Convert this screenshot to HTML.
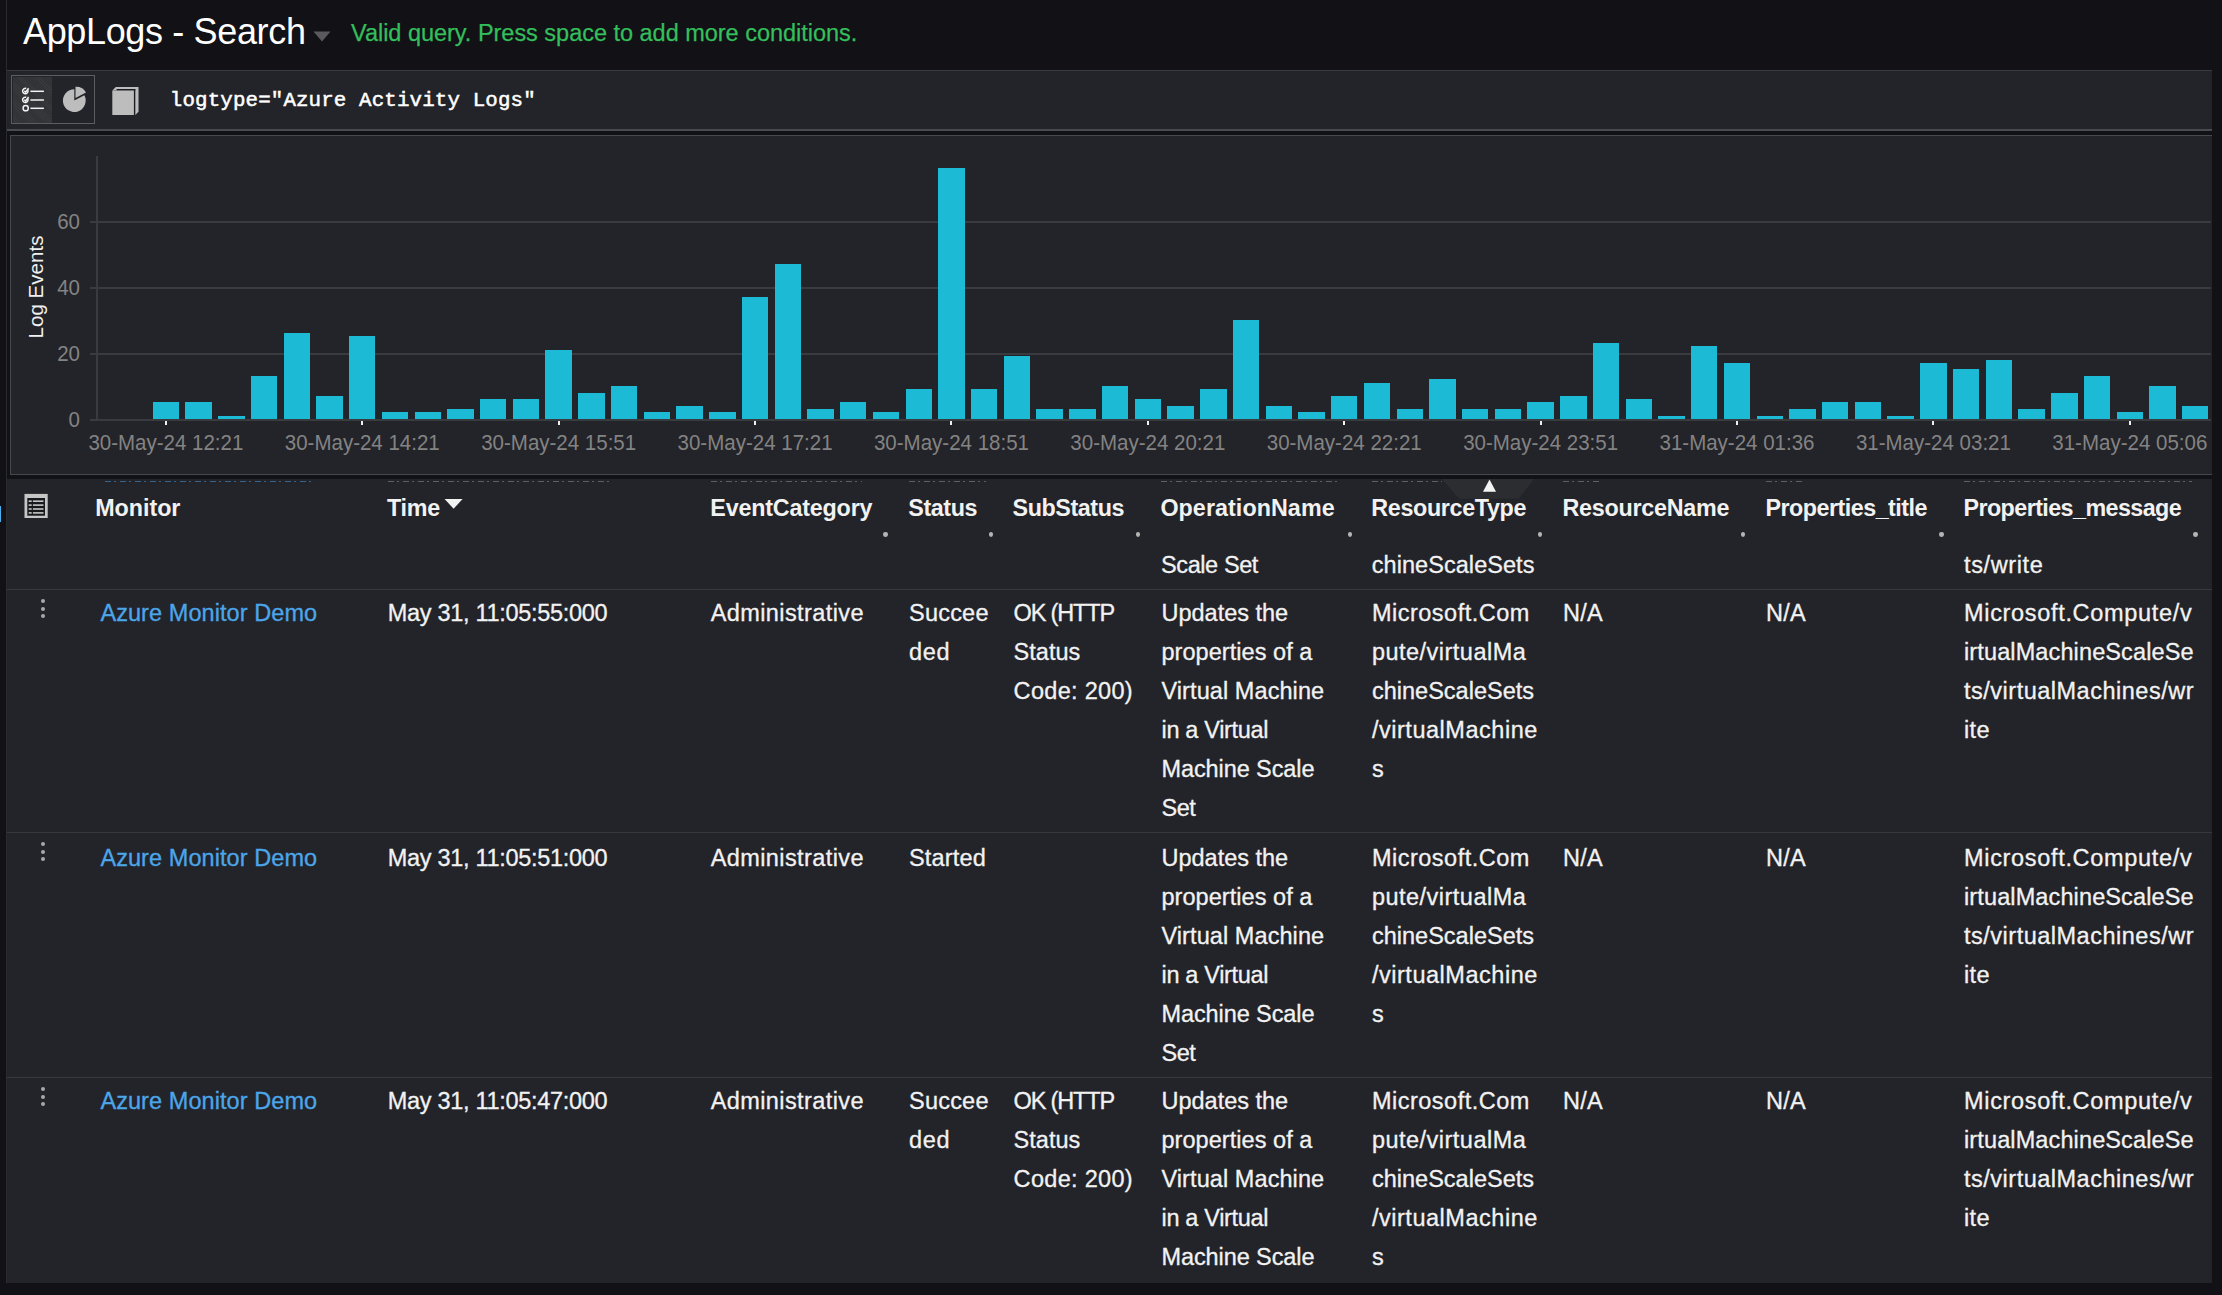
<!DOCTYPE html>
<html><head><meta charset="utf-8"><style>
html,body{margin:0;padding:0;}
body{width:2222px;height:1295px;background:#111116;position:relative;overflow:hidden;font-family:'Liberation Sans',sans-serif;}
.t{position:absolute;white-space:pre;}
.s{-webkit-text-stroke:0.3px currentColor;}
.r{position:absolute;}
</style></head><body>
<div class="t" style="left:23px;top:9.93px;font-size:36px;line-height:43.2px;color:#ffffff;font-weight:normal;font-family:'Liberation Sans';letter-spacing:-0.350px;">AppLogs - Search</div>
<svg class="r" style="left:313px;top:31px" width="18" height="11"><polygon points="0.5,0.5 17.5,0.5 9,10.5" fill="#5a5a5e"/></svg>
<div class="t" style="left:351px;top:18.76px;font-size:23.5px;line-height:28.2px;color:#34bf5c;font-weight:normal;font-family:'Liberation Sans';letter-spacing:-0.020px;-webkit-text-stroke:0.25px #34bf5c;">Valid query. Press space to add more conditions.</div>
<div class="r" style="left:6px;top:0px;width:1.4px;height:1295px;background:#2a2b2f;"></div>
<div class="r" style="left:7px;top:70px;width:2205px;height:61px;background:#232429;"></div>
<div class="r" style="left:7px;top:70px;width:2205px;height:1px;background:#3a3b40;"></div>
<div class="r" style="left:7px;top:129px;width:2205px;height:2px;background:#4a4b50;"></div>
<div class="r" style="left:11px;top:75px;width:84px;height:49px;background:transparent;box-sizing:border-box;border:1.5px solid #5c5d61"></div>
<div class="r" style="left:12.5px;top:76.5px;width:39.5px;height:46px;background:repeating-linear-gradient(45deg,#38393d 0 1px,#303135 1px 2px),#343539;"></div>
<svg class="r" style="left:12px;top:76px" width="40" height="46" viewBox="12 76 40 46">
<g fill="none" stroke="#f2f2f2" stroke-width="1.5">
<path d="M27.6,89.6 A2.7,2.7 0 1 1 26.2,88.5"/><path d="M27.6,98.4 A2.7,2.7 0 1 1 26.2,97.3"/>
<circle cx="25.7" cy="108.2" r="2.6"/>
<polyline points="24.3,90.9 25.6,92.2 28.6,88.2"/><polyline points="24.3,99.7 25.6,101 28.6,97"/>
</g>
<g stroke="#f2f2f2" stroke-width="1.5"><line x1="30.4" y1="91.3" x2="43.9" y2="91.3"/><line x1="30.4" y1="100" x2="43.9" y2="100"/><line x1="30.4" y1="108.3" x2="43.9" y2="108.3"/></g>
</svg>
<svg class="r" style="left:52px;top:76px" width="42" height="46" viewBox="52 76 42 46">
<path d="M74.3,100.6 L74.3,89.2 A11.4,11.4 0 1 0 84.4,95.3 Z" fill="#bdbdbd"/>
<path d="M75.5,98 L75.5,86.8 A11.2,11.2 0 0 1 86,92.5 Z" fill="#bdbdbd"/>
</svg>
<svg class="r" style="left:108px;top:84px" width="34" height="34" viewBox="108 84 34 34">
<polygon points="112.3,90.4 115.8,87.1 138.5,87.1 138.5,111.7 135.3,115 133.9,115 133.9,90.4" fill="#bdbdbd"/>
<rect x="116.5" y="89" width="18.8" height="1.6" fill="#1a1b1f"/>
<rect x="133.9" y="89" width="1.4" height="26" fill="#1a1b1f"/>
<rect x="112.3" y="90.6" width="21.6" height="24.4" fill="#bdbdbd"/>
</svg>
<div class="t" style="left:169.8px;top:88.68px;font-size:20.8px;line-height:24.96px;color:#ffffff;font-weight:normal;font-family:'Liberation Mono';letter-spacing:0.140px;-webkit-text-stroke:0.5px #ffffff;">logtype=&quot;Azure Activity Logs&quot;</div>
<div class="r" style="left:10px;top:135px;width:2212px;height:340px;background:#232429;box-sizing:border-box;border:1.3px solid #47484c"></div>
<div class="t" style="left:40px;width:40px;text-align:right;top:407.60px;font-size:20.5px;line-height:24px;color:#838383;font-family:'Liberation Sans';transform:scaleY(1.07);transform-origin:50% 19.10px">0</div>
<div class="r" style="left:90px;top:353.25px;width:2121px;height:1.5px;background:#3a3b3f;"></div>
<div class="t" style="left:40px;width:40px;text-align:right;top:342.10px;font-size:20.5px;line-height:24px;color:#838383;font-family:'Liberation Sans';transform:scaleY(1.07);transform-origin:50% 19.10px">20</div>
<div class="r" style="left:90px;top:287.25px;width:2121px;height:1.5px;background:#3a3b3f;"></div>
<div class="t" style="left:40px;width:40px;text-align:right;top:276.10px;font-size:20.5px;line-height:24px;color:#838383;font-family:'Liberation Sans';transform:scaleY(1.07);transform-origin:50% 19.10px">40</div>
<div class="r" style="left:90px;top:221.25px;width:2121px;height:1.5px;background:#3a3b3f;"></div>
<div class="t" style="left:40px;width:40px;text-align:right;top:210.10px;font-size:20.5px;line-height:24px;color:#838383;font-family:'Liberation Sans';transform:scaleY(1.07);transform-origin:50% 19.10px">60</div>
<div class="r" style="left:96.2px;top:156px;width:1.5px;height:264px;background:#3a3b3f;"></div>
<div class="t" style="left:35.8px;top:287px;font-size:20.6px;line-height:24px;color:#f0f0f0;font-family:'Liberation Sans';transform:translate(-50%,-50%) rotate(-90deg);white-space:nowrap">Log Events</div>
<div class="r" style="left:152.7px;top:402.4px;width:26.4px;height:16.5px;background:#1cbad5;"></div>
<div class="r" style="left:185.43px;top:402.4px;width:26.4px;height:16.5px;background:#1cbad5;"></div>
<div class="r" style="left:218.16px;top:415.6px;width:26.4px;height:3.3px;background:#1cbad5;"></div>
<div class="r" style="left:250.9px;top:376.0px;width:26.4px;height:42.9px;background:#1cbad5;"></div>
<div class="r" style="left:283.63px;top:333.1px;width:26.4px;height:85.8px;background:#1cbad5;"></div>
<div class="r" style="left:316.36px;top:395.8px;width:26.4px;height:23.1px;background:#1cbad5;"></div>
<div class="r" style="left:349.09px;top:336.4px;width:26.4px;height:82.5px;background:#1cbad5;"></div>
<div class="r" style="left:381.82px;top:412.3px;width:26.4px;height:6.6px;background:#1cbad5;"></div>
<div class="r" style="left:414.55px;top:412.3px;width:26.4px;height:6.6px;background:#1cbad5;"></div>
<div class="r" style="left:447.29px;top:409.0px;width:26.4px;height:9.9px;background:#1cbad5;"></div>
<div class="r" style="left:480.02px;top:399.1px;width:26.4px;height:19.8px;background:#1cbad5;"></div>
<div class="r" style="left:512.75px;top:399.1px;width:26.4px;height:19.8px;background:#1cbad5;"></div>
<div class="r" style="left:545.48px;top:349.6px;width:26.4px;height:69.3px;background:#1cbad5;"></div>
<div class="r" style="left:578.21px;top:392.5px;width:26.4px;height:26.4px;background:#1cbad5;"></div>
<div class="r" style="left:610.94px;top:385.9px;width:26.4px;height:33.0px;background:#1cbad5;"></div>
<div class="r" style="left:643.67px;top:412.3px;width:26.4px;height:6.6px;background:#1cbad5;"></div>
<div class="r" style="left:676.41px;top:405.7px;width:26.4px;height:13.2px;background:#1cbad5;"></div>
<div class="r" style="left:709.14px;top:412.3px;width:26.4px;height:6.6px;background:#1cbad5;"></div>
<div class="r" style="left:741.87px;top:296.8px;width:26.4px;height:122.1px;background:#1cbad5;"></div>
<div class="r" style="left:774.6px;top:263.8px;width:26.4px;height:155.1px;background:#1cbad5;"></div>
<div class="r" style="left:807.33px;top:409.0px;width:26.4px;height:9.9px;background:#1cbad5;"></div>
<div class="r" style="left:840.06px;top:402.4px;width:26.4px;height:16.5px;background:#1cbad5;"></div>
<div class="r" style="left:872.8px;top:412.3px;width:26.4px;height:6.6px;background:#1cbad5;"></div>
<div class="r" style="left:905.53px;top:389.2px;width:26.4px;height:29.7px;background:#1cbad5;"></div>
<div class="r" style="left:938.26px;top:168.1px;width:26.4px;height:250.8px;background:#1cbad5;"></div>
<div class="r" style="left:970.99px;top:389.2px;width:26.4px;height:29.7px;background:#1cbad5;"></div>
<div class="r" style="left:1003.72px;top:356.2px;width:26.4px;height:62.7px;background:#1cbad5;"></div>
<div class="r" style="left:1036.46px;top:409.0px;width:26.4px;height:9.9px;background:#1cbad5;"></div>
<div class="r" style="left:1069.19px;top:409.0px;width:26.4px;height:9.9px;background:#1cbad5;"></div>
<div class="r" style="left:1101.92px;top:385.9px;width:26.4px;height:33.0px;background:#1cbad5;"></div>
<div class="r" style="left:1134.65px;top:399.1px;width:26.4px;height:19.8px;background:#1cbad5;"></div>
<div class="r" style="left:1167.38px;top:405.7px;width:26.4px;height:13.2px;background:#1cbad5;"></div>
<div class="r" style="left:1200.11px;top:389.2px;width:26.4px;height:29.7px;background:#1cbad5;"></div>
<div class="r" style="left:1232.85px;top:319.9px;width:26.4px;height:99.0px;background:#1cbad5;"></div>
<div class="r" style="left:1265.58px;top:405.7px;width:26.4px;height:13.2px;background:#1cbad5;"></div>
<div class="r" style="left:1298.31px;top:412.3px;width:26.4px;height:6.6px;background:#1cbad5;"></div>
<div class="r" style="left:1331.04px;top:395.8px;width:26.4px;height:23.1px;background:#1cbad5;"></div>
<div class="r" style="left:1363.77px;top:382.6px;width:26.4px;height:36.3px;background:#1cbad5;"></div>
<div class="r" style="left:1396.5px;top:409.0px;width:26.4px;height:9.9px;background:#1cbad5;"></div>
<div class="r" style="left:1429.24px;top:379.3px;width:26.4px;height:39.6px;background:#1cbad5;"></div>
<div class="r" style="left:1461.97px;top:409.0px;width:26.4px;height:9.9px;background:#1cbad5;"></div>
<div class="r" style="left:1494.7px;top:409.0px;width:26.4px;height:9.9px;background:#1cbad5;"></div>
<div class="r" style="left:1527.43px;top:402.4px;width:26.4px;height:16.5px;background:#1cbad5;"></div>
<div class="r" style="left:1560.16px;top:395.8px;width:26.4px;height:23.1px;background:#1cbad5;"></div>
<div class="r" style="left:1592.89px;top:343.0px;width:26.4px;height:75.9px;background:#1cbad5;"></div>
<div class="r" style="left:1625.63px;top:399.1px;width:26.4px;height:19.8px;background:#1cbad5;"></div>
<div class="r" style="left:1658.36px;top:415.6px;width:26.4px;height:3.3px;background:#1cbad5;"></div>
<div class="r" style="left:1691.09px;top:346.3px;width:26.4px;height:72.6px;background:#1cbad5;"></div>
<div class="r" style="left:1723.82px;top:362.8px;width:26.4px;height:56.1px;background:#1cbad5;"></div>
<div class="r" style="left:1756.55px;top:415.6px;width:26.4px;height:3.3px;background:#1cbad5;"></div>
<div class="r" style="left:1789.28px;top:409.0px;width:26.4px;height:9.9px;background:#1cbad5;"></div>
<div class="r" style="left:1822.02px;top:402.4px;width:26.4px;height:16.5px;background:#1cbad5;"></div>
<div class="r" style="left:1854.75px;top:402.4px;width:26.4px;height:16.5px;background:#1cbad5;"></div>
<div class="r" style="left:1887.48px;top:415.6px;width:26.4px;height:3.3px;background:#1cbad5;"></div>
<div class="r" style="left:1920.21px;top:362.8px;width:26.4px;height:56.1px;background:#1cbad5;"></div>
<div class="r" style="left:1952.94px;top:369.4px;width:26.4px;height:49.5px;background:#1cbad5;"></div>
<div class="r" style="left:1985.67px;top:359.5px;width:26.4px;height:59.4px;background:#1cbad5;"></div>
<div class="r" style="left:2018.41px;top:409.0px;width:26.4px;height:9.9px;background:#1cbad5;"></div>
<div class="r" style="left:2051.14px;top:392.5px;width:26.4px;height:26.4px;background:#1cbad5;"></div>
<div class="r" style="left:2083.87px;top:376.0px;width:26.4px;height:42.9px;background:#1cbad5;"></div>
<div class="r" style="left:2116.6px;top:412.3px;width:26.4px;height:6.6px;background:#1cbad5;"></div>
<div class="r" style="left:2149.33px;top:385.9px;width:26.4px;height:33.0px;background:#1cbad5;"></div>
<div class="r" style="left:2182.06px;top:405.7px;width:26.4px;height:13.2px;background:#1cbad5;"></div>
<div class="r" style="left:90px;top:419.2px;width:2121px;height:1.6px;background:#3a3b3f;"></div>
<div class="r" style="left:164.9px;top:421px;width:2px;height:3.5px;background:#f0f0f0;"></div>
<div class="t" style="left:65.90px;width:200px;text-align:center;top:431.20px;font-size:20.5px;line-height:24px;color:#838383;font-family:'Liberation Sans';transform:scaleY(1.065);transform-origin:50% 19.10px">30-May-24 12:21</div>
<div class="r" style="left:361.29px;top:421px;width:2px;height:3.5px;background:#f0f0f0;"></div>
<div class="t" style="left:262.29px;width:200px;text-align:center;top:431.20px;font-size:20.5px;line-height:24px;color:#838383;font-family:'Liberation Sans';transform:scaleY(1.065);transform-origin:50% 19.10px">30-May-24 14:21</div>
<div class="r" style="left:557.68px;top:421px;width:2px;height:3.5px;background:#f0f0f0;"></div>
<div class="t" style="left:458.68px;width:200px;text-align:center;top:431.20px;font-size:20.5px;line-height:24px;color:#838383;font-family:'Liberation Sans';transform:scaleY(1.065);transform-origin:50% 19.10px">30-May-24 15:51</div>
<div class="r" style="left:754.07px;top:421px;width:2px;height:3.5px;background:#f0f0f0;"></div>
<div class="t" style="left:655.07px;width:200px;text-align:center;top:431.20px;font-size:20.5px;line-height:24px;color:#838383;font-family:'Liberation Sans';transform:scaleY(1.065);transform-origin:50% 19.10px">30-May-24 17:21</div>
<div class="r" style="left:950.46px;top:421px;width:2px;height:3.5px;background:#f0f0f0;"></div>
<div class="t" style="left:851.46px;width:200px;text-align:center;top:431.20px;font-size:20.5px;line-height:24px;color:#838383;font-family:'Liberation Sans';transform:scaleY(1.065);transform-origin:50% 19.10px">30-May-24 18:51</div>
<div class="r" style="left:1146.85px;top:421px;width:2px;height:3.5px;background:#f0f0f0;"></div>
<div class="t" style="left:1047.85px;width:200px;text-align:center;top:431.20px;font-size:20.5px;line-height:24px;color:#838383;font-family:'Liberation Sans';transform:scaleY(1.065);transform-origin:50% 19.10px">30-May-24 20:21</div>
<div class="r" style="left:1343.24px;top:421px;width:2px;height:3.5px;background:#f0f0f0;"></div>
<div class="t" style="left:1244.24px;width:200px;text-align:center;top:431.20px;font-size:20.5px;line-height:24px;color:#838383;font-family:'Liberation Sans';transform:scaleY(1.065);transform-origin:50% 19.10px">30-May-24 22:21</div>
<div class="r" style="left:1539.63px;top:421px;width:2px;height:3.5px;background:#f0f0f0;"></div>
<div class="t" style="left:1440.63px;width:200px;text-align:center;top:431.20px;font-size:20.5px;line-height:24px;color:#838383;font-family:'Liberation Sans';transform:scaleY(1.065);transform-origin:50% 19.10px">30-May-24 23:51</div>
<div class="r" style="left:1736.02px;top:421px;width:2px;height:3.5px;background:#f0f0f0;"></div>
<div class="t" style="left:1637.02px;width:200px;text-align:center;top:431.20px;font-size:20.5px;line-height:24px;color:#838383;font-family:'Liberation Sans';transform:scaleY(1.065);transform-origin:50% 19.10px">31-May-24 01:36</div>
<div class="r" style="left:1932.41px;top:421px;width:2px;height:3.5px;background:#f0f0f0;"></div>
<div class="t" style="left:1833.41px;width:200px;text-align:center;top:431.20px;font-size:20.5px;line-height:24px;color:#838383;font-family:'Liberation Sans';transform:scaleY(1.065);transform-origin:50% 19.10px">31-May-24 03:21</div>
<div class="r" style="left:2128.8px;top:421px;width:2px;height:3.5px;background:#f0f0f0;"></div>
<div class="t" style="left:2029.80px;width:200px;text-align:center;top:431.20px;font-size:20.5px;line-height:24px;color:#838383;font-family:'Liberation Sans';transform:scaleY(1.065);transform-origin:50% 19.10px">31-May-24 05:06</div>
<div class="r" style="left:7px;top:479px;width:2205px;height:804px;background:#232429;"></div>
<div class="r" style="left:104.6px;top:480.6px;width:210px;height:1.0px;background:repeating-linear-gradient(90deg,#35658e 0 6px,transparent 6px 9px,#35658e 9px 11px,transparent 11px 15px);"></div>
<div class="r" style="left:388px;top:480.6px;width:222px;height:1.0px;background:repeating-linear-gradient(90deg,#5e5e62 0 6px,transparent 6px 9px,#5e5e62 9px 11px,transparent 11px 15px);"></div>
<div class="r" style="left:711px;top:480.6px;width:151px;height:1.0px;background:repeating-linear-gradient(90deg,#5e5e62 0 6px,transparent 6px 9px,#5e5e62 9px 11px,transparent 11px 15px);"></div>
<div class="r" style="left:909px;top:480.6px;width:77px;height:1.0px;background:repeating-linear-gradient(90deg,#5e5e62 0 6px,transparent 6px 9px,#5e5e62 9px 11px,transparent 11px 15px);"></div>
<div class="r" style="left:1161px;top:480.6px;width:178px;height:1.0px;background:repeating-linear-gradient(90deg,#5e5e62 0 6px,transparent 6px 9px,#5e5e62 9px 11px,transparent 11px 15px);"></div>
<div class="r" style="left:1372px;top:480.6px;width:70px;height:1.0px;background:repeating-linear-gradient(90deg,#5e5e62 0 6px,transparent 6px 9px,#5e5e62 9px 11px,transparent 11px 15px);"></div>
<div class="r" style="left:1563px;top:480.6px;width:36px;height:1.0px;background:repeating-linear-gradient(90deg,#5e5e62 0 6px,transparent 6px 9px,#5e5e62 9px 11px,transparent 11px 15px);"></div>
<div class="r" style="left:1766px;top:480.6px;width:36px;height:1.0px;background:repeating-linear-gradient(90deg,#5e5e62 0 6px,transparent 6px 9px,#5e5e62 9px 11px,transparent 11px 15px);"></div>
<div class="r" style="left:1964px;top:480.6px;width:228px;height:1.0px;background:repeating-linear-gradient(90deg,#5e5e62 0 6px,transparent 6px 9px,#5e5e62 9px 11px,transparent 11px 15px);"></div>
<div class="r" style="left:0px;top:505.5px;width:1.4px;height:16px;background:#4ab0f0;"></div>
<svg class="r" style="left:24px;top:493px" width="25" height="27" viewBox="24 493 25 27">
<rect x="24.5" y="493.9" width="23.2" height="24.1" fill="#c6c6c6"/>
<rect x="27.3" y="498" width="17.7" height="17.7" fill="#18191d"/>
<g fill="#c6c6c6"><rect x="28.7" y="500.4" width="3" height="1.6"/><rect x="32.9" y="500.4" width="10.6" height="1.6"/>
<rect x="28.7" y="504.3" width="3" height="1.6"/><rect x="32.9" y="504.3" width="10.6" height="1.6"/>
<rect x="28.7" y="508.2" width="3" height="1.6"/><rect x="32.9" y="508.2" width="10.6" height="1.6"/>
<rect x="28.7" y="512.1" width="3" height="1.6"/><rect x="32.9" y="512.1" width="10.6" height="1.6"/></g>
</svg>
<div class="t" style="left:95.2px;top:495.35px;font-size:23.3px;line-height:27.96px;color:#f2f2f2;font-weight:bold;font-family:'Liberation Sans';letter-spacing:-0.030px;">Monitor</div>
<div class="t" style="left:387px;top:495.35px;font-size:23.3px;line-height:27.96px;color:#f2f2f2;font-weight:bold;font-family:'Liberation Sans';letter-spacing:-0.268px;">Time</div>
<div class="t" style="left:710.3px;top:495.35px;font-size:23.3px;line-height:27.96px;color:#f2f2f2;font-weight:bold;font-family:'Liberation Sans';letter-spacing:-0.186px;">EventCategory</div>
<div class="t" style="left:908.3px;top:495.35px;font-size:23.3px;line-height:27.96px;color:#f2f2f2;font-weight:bold;font-family:'Liberation Sans';letter-spacing:-0.417px;">Status</div>
<div class="t" style="left:1012.5px;top:495.35px;font-size:23.3px;line-height:27.96px;color:#f2f2f2;font-weight:bold;font-family:'Liberation Sans';letter-spacing:-0.400px;">SubStatus</div>
<div class="t" style="left:1160.4px;top:495.35px;font-size:23.3px;line-height:27.96px;color:#f2f2f2;font-weight:bold;font-family:'Liberation Sans';letter-spacing:0.063px;">OperationName</div>
<div class="t" style="left:1371.3px;top:495.35px;font-size:23.3px;line-height:27.96px;color:#f2f2f2;font-weight:bold;font-family:'Liberation Sans';letter-spacing:-0.336px;">ResourceType</div>
<div class="t" style="left:1562.5px;top:495.35px;font-size:23.3px;line-height:27.96px;color:#f2f2f2;font-weight:bold;font-family:'Liberation Sans';letter-spacing:-0.237px;">ResourceName</div>
<div class="t" style="left:1765.5px;top:495.35px;font-size:23.3px;line-height:27.96px;color:#f2f2f2;font-weight:bold;font-family:'Liberation Sans';letter-spacing:-0.507px;">Properties_title</div>
<div class="t" style="left:1963.5px;top:495.35px;font-size:23.3px;line-height:27.96px;color:#f2f2f2;font-weight:bold;font-family:'Liberation Sans';letter-spacing:-0.573px;">Properties_message</div>
<svg class="r" style="left:444px;top:498px" width="20" height="12"><polygon points="0.6,1 18.6,1 9.6,10.7" fill="#f2f2f2"/></svg>
<div class="r" style="left:883.2px;top:531.8px;width:4.4px;height:4.8px;border-radius:50% 50% 50% 50% / 45% 45% 55% 55%;background:#b4b4b4"></div>
<div class="r" style="left:988.8px;top:531.8px;width:4.4px;height:4.8px;border-radius:50% 50% 50% 50% / 45% 45% 55% 55%;background:#b4b4b4"></div>
<div class="r" style="left:1135.7px;top:531.8px;width:4.4px;height:4.8px;border-radius:50% 50% 50% 50% / 45% 45% 55% 55%;background:#b4b4b4"></div>
<div class="r" style="left:1347.5px;top:531.8px;width:4.4px;height:4.8px;border-radius:50% 50% 50% 50% / 45% 45% 55% 55%;background:#b4b4b4"></div>
<div class="r" style="left:1537.5px;top:531.8px;width:4.4px;height:4.8px;border-radius:50% 50% 50% 50% / 45% 45% 55% 55%;background:#b4b4b4"></div>
<div class="r" style="left:1741.1px;top:531.8px;width:4.4px;height:4.8px;border-radius:50% 50% 50% 50% / 45% 45% 55% 55%;background:#b4b4b4"></div>
<div class="r" style="left:1939.2px;top:531.8px;width:4.4px;height:4.8px;border-radius:50% 50% 50% 50% / 45% 45% 55% 55%;background:#b4b4b4"></div>
<div class="r" style="left:2193.3px;top:531.8px;width:4.4px;height:4.8px;border-radius:50% 50% 50% 50% / 45% 45% 55% 55%;background:#b4b4b4"></div>
<svg class="r" style="left:1440px;top:478px" width="96" height="22" viewBox="1440 478 96 22">
<polygon points="1442,479 1534,479 1518.6,498.7 1459,498.7" fill="#2c2d31"/>
<polygon points="1489.5,479.4 1496,491.7 1483,491.7" fill="#f4f4f4"/>
</svg>
<div class="t" style="left:1161px;top:550.96px;font-size:23.5px;line-height:28.2px;color:#f2f2f2;font-weight:normal;font-family:'Liberation Sans';letter-spacing:-0.399px;-webkit-text-stroke:0.3px #f2f2f2;">Scale Set</div>
<div class="t" style="left:1371.8px;top:550.96px;font-size:23.5px;line-height:28.2px;color:#f2f2f2;font-weight:normal;font-family:'Liberation Sans';letter-spacing:0.050px;-webkit-text-stroke:0.3px #f2f2f2;">chineScaleSets</div>
<div class="t" style="left:1964px;top:550.96px;font-size:23.5px;line-height:28.2px;color:#f2f2f2;font-weight:normal;font-family:'Liberation Sans';letter-spacing:0.633px;-webkit-text-stroke:0.3px #f2f2f2;">ts/write</div>
<div class="r" style="left:7px;top:588.6999999999999px;width:2205px;height:1.3px;background:#38393e;"></div>
<div class="r" style="left:7px;top:832.1999999999999px;width:2205px;height:1.3px;background:#38393e;"></div>
<div class="r" style="left:7px;top:1077.2px;width:2205px;height:1.3px;background:#38393e;"></div>
<div class="r" style="left:41.4px;top:599.0px;width:4px;height:4px;border-radius:50%;background:#a8a8a8"></div>
<div class="r" style="left:41.4px;top:606.6px;width:4px;height:4px;border-radius:50%;background:#a8a8a8"></div>
<div class="r" style="left:41.4px;top:614.2px;width:4px;height:4px;border-radius:50%;background:#a8a8a8"></div>
<div class="t" style="left:100.4px;top:598.86px;font-size:23.5px;line-height:28.2px;color:#4ba6ea;font-weight:normal;font-family:'Liberation Sans';letter-spacing:0.072px;-webkit-text-stroke:0.3px #4ba6ea;">Azure Monitor Demo</div>
<div class="t" style="left:387.7px;top:598.86px;font-size:23.5px;line-height:28.2px;color:#f2f2f2;font-weight:normal;font-family:'Liberation Sans';letter-spacing:-0.300px;-webkit-text-stroke:0.3px #f2f2f2;">May 31, 11:05:55:000</div>
<div class="t" style="left:710.7px;top:598.86px;font-size:23.5px;line-height:28.2px;color:#f2f2f2;font-weight:normal;font-family:'Liberation Sans';letter-spacing:0.401px;-webkit-text-stroke:0.3px #f2f2f2;">Administrative</div>
<div class="t" style="left:909px;top:598.86px;font-size:23.5px;line-height:28.2px;color:#f2f2f2;font-weight:normal;font-family:'Liberation Sans';letter-spacing:0.218px;-webkit-text-stroke:0.3px #f2f2f2;">Succee</div>
<div class="t" style="left:909px;top:637.86px;font-size:23.5px;line-height:28.2px;color:#f2f2f2;font-weight:normal;font-family:'Liberation Sans';letter-spacing:0.727px;-webkit-text-stroke:0.3px #f2f2f2;">ded</div>
<div class="t" style="left:1013.6px;top:598.86px;font-size:23.5px;line-height:28.2px;color:#f2f2f2;font-weight:normal;font-family:'Liberation Sans';letter-spacing:-1.159px;-webkit-text-stroke:0.3px #f2f2f2;">OK (HTTP</div>
<div class="t" style="left:1013.6px;top:637.86px;font-size:23.5px;line-height:28.2px;color:#f2f2f2;font-weight:normal;font-family:'Liberation Sans';letter-spacing:0.013px;-webkit-text-stroke:0.3px #f2f2f2;">Status</div>
<div class="t" style="left:1013.6px;top:676.86px;font-size:23.5px;line-height:28.2px;color:#f2f2f2;font-weight:normal;font-family:'Liberation Sans';letter-spacing:0.312px;-webkit-text-stroke:0.3px #f2f2f2;">Code: 200)</div>
<div class="t" style="left:1161.5px;top:598.86px;font-size:23.5px;line-height:28.2px;color:#f2f2f2;font-weight:normal;font-family:'Liberation Sans';letter-spacing:-0.012px;-webkit-text-stroke:0.3px #f2f2f2;">Updates the</div>
<div class="t" style="left:1161.5px;top:637.86px;font-size:23.5px;line-height:28.2px;color:#f2f2f2;font-weight:normal;font-family:'Liberation Sans';letter-spacing:0.045px;-webkit-text-stroke:0.3px #f2f2f2;">properties of a</div>
<div class="t" style="left:1161.5px;top:676.86px;font-size:23.5px;line-height:28.2px;color:#f2f2f2;font-weight:normal;font-family:'Liberation Sans';letter-spacing:0.077px;-webkit-text-stroke:0.3px #f2f2f2;">Virtual Machine</div>
<div class="t" style="left:1161.5px;top:715.86px;font-size:23.5px;line-height:28.2px;color:#f2f2f2;font-weight:normal;font-family:'Liberation Sans';letter-spacing:-0.334px;-webkit-text-stroke:0.3px #f2f2f2;">in a Virtual</div>
<div class="t" style="left:1161.5px;top:754.86px;font-size:23.5px;line-height:28.2px;color:#f2f2f2;font-weight:normal;font-family:'Liberation Sans';letter-spacing:-0.095px;-webkit-text-stroke:0.3px #f2f2f2;">Machine Scale</div>
<div class="t" style="left:1161.5px;top:793.86px;font-size:23.5px;line-height:28.2px;color:#f2f2f2;font-weight:normal;font-family:'Liberation Sans';letter-spacing:-0.460px;-webkit-text-stroke:0.3px #f2f2f2;">Set</div>
<div class="t" style="left:1371.9px;top:598.86px;font-size:23.5px;line-height:28.2px;color:#f2f2f2;font-weight:normal;font-family:'Liberation Sans';letter-spacing:0.502px;-webkit-text-stroke:0.3px #f2f2f2;">Microsoft.Com</div>
<div class="t" style="left:1371.9px;top:637.86px;font-size:23.5px;line-height:28.2px;color:#f2f2f2;font-weight:normal;font-family:'Liberation Sans';letter-spacing:0.485px;-webkit-text-stroke:0.3px #f2f2f2;">pute/virtualMa</div>
<div class="t" style="left:1371.9px;top:676.86px;font-size:23.5px;line-height:28.2px;color:#f2f2f2;font-weight:normal;font-family:'Liberation Sans';letter-spacing:0.014px;-webkit-text-stroke:0.3px #f2f2f2;">chineScaleSets</div>
<div class="t" style="left:1371.9px;top:715.86px;font-size:23.5px;line-height:28.2px;color:#f2f2f2;font-weight:normal;font-family:'Liberation Sans';letter-spacing:0.530px;-webkit-text-stroke:0.3px #f2f2f2;">/virtualMachine</div>
<div class="t" style="left:1371.9px;top:754.86px;font-size:23.5px;line-height:28.2px;color:#f2f2f2;font-weight:normal;font-family:'Liberation Sans';-webkit-text-stroke:0.3px #f2f2f2;">s</div>
<div class="t" style="left:1563px;top:598.86px;font-size:23.5px;line-height:28.2px;color:#f2f2f2;font-weight:normal;font-family:'Liberation Sans';letter-spacing:0.203px;-webkit-text-stroke:0.3px #f2f2f2;">N/A</div>
<div class="t" style="left:1766px;top:598.86px;font-size:23.5px;line-height:28.2px;color:#f2f2f2;font-weight:normal;font-family:'Liberation Sans';letter-spacing:0.203px;-webkit-text-stroke:0.3px #f2f2f2;">N/A</div>
<div class="t" style="left:1964px;top:598.86px;font-size:23.5px;line-height:28.2px;color:#f2f2f2;font-weight:normal;font-family:'Liberation Sans';letter-spacing:0.675px;-webkit-text-stroke:0.3px #f2f2f2;">Microsoft.Compute/v</div>
<div class="t" style="left:1964px;top:637.86px;font-size:23.5px;line-height:28.2px;color:#f2f2f2;font-weight:normal;font-family:'Liberation Sans';letter-spacing:0.120px;-webkit-text-stroke:0.3px #f2f2f2;">irtualMachineScaleSe</div>
<div class="t" style="left:1964px;top:676.86px;font-size:23.5px;line-height:28.2px;color:#f2f2f2;font-weight:normal;font-family:'Liberation Sans';letter-spacing:0.504px;-webkit-text-stroke:0.3px #f2f2f2;">ts/virtualMachines/wr</div>
<div class="t" style="left:1964px;top:715.86px;font-size:23.5px;line-height:28.2px;color:#f2f2f2;font-weight:normal;font-family:'Liberation Sans';letter-spacing:0.390px;-webkit-text-stroke:0.3px #f2f2f2;">ite</div>
<div class="r" style="left:41.4px;top:842.1px;width:4px;height:4px;border-radius:50%;background:#a8a8a8"></div>
<div class="r" style="left:41.4px;top:849.7px;width:4px;height:4px;border-radius:50%;background:#a8a8a8"></div>
<div class="r" style="left:41.4px;top:857.3px;width:4px;height:4px;border-radius:50%;background:#a8a8a8"></div>
<div class="t" style="left:100.4px;top:843.66px;font-size:23.5px;line-height:28.2px;color:#4ba6ea;font-weight:normal;font-family:'Liberation Sans';letter-spacing:0.072px;-webkit-text-stroke:0.3px #4ba6ea;">Azure Monitor Demo</div>
<div class="t" style="left:387.7px;top:843.66px;font-size:23.5px;line-height:28.2px;color:#f2f2f2;font-weight:normal;font-family:'Liberation Sans';letter-spacing:-0.300px;-webkit-text-stroke:0.3px #f2f2f2;">May 31, 11:05:51:000</div>
<div class="t" style="left:710.7px;top:843.66px;font-size:23.5px;line-height:28.2px;color:#f2f2f2;font-weight:normal;font-family:'Liberation Sans';letter-spacing:0.401px;-webkit-text-stroke:0.3px #f2f2f2;">Administrative</div>
<div class="t" style="left:909px;top:843.66px;font-size:23.5px;line-height:28.2px;color:#f2f2f2;font-weight:normal;font-family:'Liberation Sans';letter-spacing:0.174px;-webkit-text-stroke:0.3px #f2f2f2;">Started</div>
<div class="t" style="left:1161.5px;top:843.66px;font-size:23.5px;line-height:28.2px;color:#f2f2f2;font-weight:normal;font-family:'Liberation Sans';letter-spacing:-0.012px;-webkit-text-stroke:0.3px #f2f2f2;">Updates the</div>
<div class="t" style="left:1161.5px;top:882.66px;font-size:23.5px;line-height:28.2px;color:#f2f2f2;font-weight:normal;font-family:'Liberation Sans';letter-spacing:0.045px;-webkit-text-stroke:0.3px #f2f2f2;">properties of a</div>
<div class="t" style="left:1161.5px;top:921.66px;font-size:23.5px;line-height:28.2px;color:#f2f2f2;font-weight:normal;font-family:'Liberation Sans';letter-spacing:0.077px;-webkit-text-stroke:0.3px #f2f2f2;">Virtual Machine</div>
<div class="t" style="left:1161.5px;top:960.66px;font-size:23.5px;line-height:28.2px;color:#f2f2f2;font-weight:normal;font-family:'Liberation Sans';letter-spacing:-0.334px;-webkit-text-stroke:0.3px #f2f2f2;">in a Virtual</div>
<div class="t" style="left:1161.5px;top:999.66px;font-size:23.5px;line-height:28.2px;color:#f2f2f2;font-weight:normal;font-family:'Liberation Sans';letter-spacing:-0.095px;-webkit-text-stroke:0.3px #f2f2f2;">Machine Scale</div>
<div class="t" style="left:1161.5px;top:1038.66px;font-size:23.5px;line-height:28.2px;color:#f2f2f2;font-weight:normal;font-family:'Liberation Sans';letter-spacing:-0.460px;-webkit-text-stroke:0.3px #f2f2f2;">Set</div>
<div class="t" style="left:1371.9px;top:843.66px;font-size:23.5px;line-height:28.2px;color:#f2f2f2;font-weight:normal;font-family:'Liberation Sans';letter-spacing:0.502px;-webkit-text-stroke:0.3px #f2f2f2;">Microsoft.Com</div>
<div class="t" style="left:1371.9px;top:882.66px;font-size:23.5px;line-height:28.2px;color:#f2f2f2;font-weight:normal;font-family:'Liberation Sans';letter-spacing:0.485px;-webkit-text-stroke:0.3px #f2f2f2;">pute/virtualMa</div>
<div class="t" style="left:1371.9px;top:921.66px;font-size:23.5px;line-height:28.2px;color:#f2f2f2;font-weight:normal;font-family:'Liberation Sans';letter-spacing:0.014px;-webkit-text-stroke:0.3px #f2f2f2;">chineScaleSets</div>
<div class="t" style="left:1371.9px;top:960.66px;font-size:23.5px;line-height:28.2px;color:#f2f2f2;font-weight:normal;font-family:'Liberation Sans';letter-spacing:0.530px;-webkit-text-stroke:0.3px #f2f2f2;">/virtualMachine</div>
<div class="t" style="left:1371.9px;top:999.66px;font-size:23.5px;line-height:28.2px;color:#f2f2f2;font-weight:normal;font-family:'Liberation Sans';-webkit-text-stroke:0.3px #f2f2f2;">s</div>
<div class="t" style="left:1563px;top:843.66px;font-size:23.5px;line-height:28.2px;color:#f2f2f2;font-weight:normal;font-family:'Liberation Sans';letter-spacing:0.203px;-webkit-text-stroke:0.3px #f2f2f2;">N/A</div>
<div class="t" style="left:1766px;top:843.66px;font-size:23.5px;line-height:28.2px;color:#f2f2f2;font-weight:normal;font-family:'Liberation Sans';letter-spacing:0.203px;-webkit-text-stroke:0.3px #f2f2f2;">N/A</div>
<div class="t" style="left:1964px;top:843.66px;font-size:23.5px;line-height:28.2px;color:#f2f2f2;font-weight:normal;font-family:'Liberation Sans';letter-spacing:0.675px;-webkit-text-stroke:0.3px #f2f2f2;">Microsoft.Compute/v</div>
<div class="t" style="left:1964px;top:882.66px;font-size:23.5px;line-height:28.2px;color:#f2f2f2;font-weight:normal;font-family:'Liberation Sans';letter-spacing:0.120px;-webkit-text-stroke:0.3px #f2f2f2;">irtualMachineScaleSe</div>
<div class="t" style="left:1964px;top:921.66px;font-size:23.5px;line-height:28.2px;color:#f2f2f2;font-weight:normal;font-family:'Liberation Sans';letter-spacing:0.504px;-webkit-text-stroke:0.3px #f2f2f2;">ts/virtualMachines/wr</div>
<div class="t" style="left:1964px;top:960.66px;font-size:23.5px;line-height:28.2px;color:#f2f2f2;font-weight:normal;font-family:'Liberation Sans';letter-spacing:0.390px;-webkit-text-stroke:0.3px #f2f2f2;">ite</div>
<div class="r" style="left:41.4px;top:1087.1px;width:4px;height:4px;border-radius:50%;background:#a8a8a8"></div>
<div class="r" style="left:41.4px;top:1094.7px;width:4px;height:4px;border-radius:50%;background:#a8a8a8"></div>
<div class="r" style="left:41.4px;top:1102.3px;width:4px;height:4px;border-radius:50%;background:#a8a8a8"></div>
<div class="t" style="left:100.4px;top:1086.56px;font-size:23.5px;line-height:28.2px;color:#4ba6ea;font-weight:normal;font-family:'Liberation Sans';letter-spacing:0.072px;-webkit-text-stroke:0.3px #4ba6ea;">Azure Monitor Demo</div>
<div class="t" style="left:387.7px;top:1086.56px;font-size:23.5px;line-height:28.2px;color:#f2f2f2;font-weight:normal;font-family:'Liberation Sans';letter-spacing:-0.300px;-webkit-text-stroke:0.3px #f2f2f2;">May 31, 11:05:47:000</div>
<div class="t" style="left:710.7px;top:1086.56px;font-size:23.5px;line-height:28.2px;color:#f2f2f2;font-weight:normal;font-family:'Liberation Sans';letter-spacing:0.401px;-webkit-text-stroke:0.3px #f2f2f2;">Administrative</div>
<div class="t" style="left:909px;top:1086.56px;font-size:23.5px;line-height:28.2px;color:#f2f2f2;font-weight:normal;font-family:'Liberation Sans';letter-spacing:0.218px;-webkit-text-stroke:0.3px #f2f2f2;">Succee</div>
<div class="t" style="left:909px;top:1125.56px;font-size:23.5px;line-height:28.2px;color:#f2f2f2;font-weight:normal;font-family:'Liberation Sans';letter-spacing:0.727px;-webkit-text-stroke:0.3px #f2f2f2;">ded</div>
<div class="t" style="left:1013.6px;top:1086.56px;font-size:23.5px;line-height:28.2px;color:#f2f2f2;font-weight:normal;font-family:'Liberation Sans';letter-spacing:-1.159px;-webkit-text-stroke:0.3px #f2f2f2;">OK (HTTP</div>
<div class="t" style="left:1013.6px;top:1125.56px;font-size:23.5px;line-height:28.2px;color:#f2f2f2;font-weight:normal;font-family:'Liberation Sans';letter-spacing:0.013px;-webkit-text-stroke:0.3px #f2f2f2;">Status</div>
<div class="t" style="left:1013.6px;top:1164.56px;font-size:23.5px;line-height:28.2px;color:#f2f2f2;font-weight:normal;font-family:'Liberation Sans';letter-spacing:0.312px;-webkit-text-stroke:0.3px #f2f2f2;">Code: 200)</div>
<div class="t" style="left:1161.5px;top:1086.56px;font-size:23.5px;line-height:28.2px;color:#f2f2f2;font-weight:normal;font-family:'Liberation Sans';letter-spacing:-0.012px;-webkit-text-stroke:0.3px #f2f2f2;">Updates the</div>
<div class="t" style="left:1161.5px;top:1125.56px;font-size:23.5px;line-height:28.2px;color:#f2f2f2;font-weight:normal;font-family:'Liberation Sans';letter-spacing:0.045px;-webkit-text-stroke:0.3px #f2f2f2;">properties of a</div>
<div class="t" style="left:1161.5px;top:1164.56px;font-size:23.5px;line-height:28.2px;color:#f2f2f2;font-weight:normal;font-family:'Liberation Sans';letter-spacing:0.077px;-webkit-text-stroke:0.3px #f2f2f2;">Virtual Machine</div>
<div class="t" style="left:1161.5px;top:1203.56px;font-size:23.5px;line-height:28.2px;color:#f2f2f2;font-weight:normal;font-family:'Liberation Sans';letter-spacing:-0.334px;-webkit-text-stroke:0.3px #f2f2f2;">in a Virtual</div>
<div class="t" style="left:1161.5px;top:1242.56px;font-size:23.5px;line-height:28.2px;color:#f2f2f2;font-weight:normal;font-family:'Liberation Sans';letter-spacing:-0.095px;-webkit-text-stroke:0.3px #f2f2f2;">Machine Scale</div>
<div class="t" style="left:1161.5px;top:1281.56px;font-size:23.5px;line-height:28.2px;color:#f2f2f2;font-weight:normal;font-family:'Liberation Sans';letter-spacing:-0.460px;-webkit-text-stroke:0.3px #f2f2f2;">Set</div>
<div class="t" style="left:1371.9px;top:1086.56px;font-size:23.5px;line-height:28.2px;color:#f2f2f2;font-weight:normal;font-family:'Liberation Sans';letter-spacing:0.502px;-webkit-text-stroke:0.3px #f2f2f2;">Microsoft.Com</div>
<div class="t" style="left:1371.9px;top:1125.56px;font-size:23.5px;line-height:28.2px;color:#f2f2f2;font-weight:normal;font-family:'Liberation Sans';letter-spacing:0.485px;-webkit-text-stroke:0.3px #f2f2f2;">pute/virtualMa</div>
<div class="t" style="left:1371.9px;top:1164.56px;font-size:23.5px;line-height:28.2px;color:#f2f2f2;font-weight:normal;font-family:'Liberation Sans';letter-spacing:0.014px;-webkit-text-stroke:0.3px #f2f2f2;">chineScaleSets</div>
<div class="t" style="left:1371.9px;top:1203.56px;font-size:23.5px;line-height:28.2px;color:#f2f2f2;font-weight:normal;font-family:'Liberation Sans';letter-spacing:0.530px;-webkit-text-stroke:0.3px #f2f2f2;">/virtualMachine</div>
<div class="t" style="left:1371.9px;top:1242.56px;font-size:23.5px;line-height:28.2px;color:#f2f2f2;font-weight:normal;font-family:'Liberation Sans';-webkit-text-stroke:0.3px #f2f2f2;">s</div>
<div class="t" style="left:1563px;top:1086.56px;font-size:23.5px;line-height:28.2px;color:#f2f2f2;font-weight:normal;font-family:'Liberation Sans';letter-spacing:0.203px;-webkit-text-stroke:0.3px #f2f2f2;">N/A</div>
<div class="t" style="left:1766px;top:1086.56px;font-size:23.5px;line-height:28.2px;color:#f2f2f2;font-weight:normal;font-family:'Liberation Sans';letter-spacing:0.203px;-webkit-text-stroke:0.3px #f2f2f2;">N/A</div>
<div class="t" style="left:1964px;top:1086.56px;font-size:23.5px;line-height:28.2px;color:#f2f2f2;font-weight:normal;font-family:'Liberation Sans';letter-spacing:0.675px;-webkit-text-stroke:0.3px #f2f2f2;">Microsoft.Compute/v</div>
<div class="t" style="left:1964px;top:1125.56px;font-size:23.5px;line-height:28.2px;color:#f2f2f2;font-weight:normal;font-family:'Liberation Sans';letter-spacing:0.120px;-webkit-text-stroke:0.3px #f2f2f2;">irtualMachineScaleSe</div>
<div class="t" style="left:1964px;top:1164.56px;font-size:23.5px;line-height:28.2px;color:#f2f2f2;font-weight:normal;font-family:'Liberation Sans';letter-spacing:0.504px;-webkit-text-stroke:0.3px #f2f2f2;">ts/virtualMachines/wr</div>
<div class="t" style="left:1964px;top:1203.56px;font-size:23.5px;line-height:28.2px;color:#f2f2f2;font-weight:normal;font-family:'Liberation Sans';letter-spacing:0.390px;-webkit-text-stroke:0.3px #f2f2f2;">ite</div>
<div class="r" style="left:0px;top:1283px;width:2222px;height:12px;background:#111116;"></div>
<div class="r" style="left:2212px;top:62px;width:10px;height:1233px;background:#111116;"></div>
</body></html>
